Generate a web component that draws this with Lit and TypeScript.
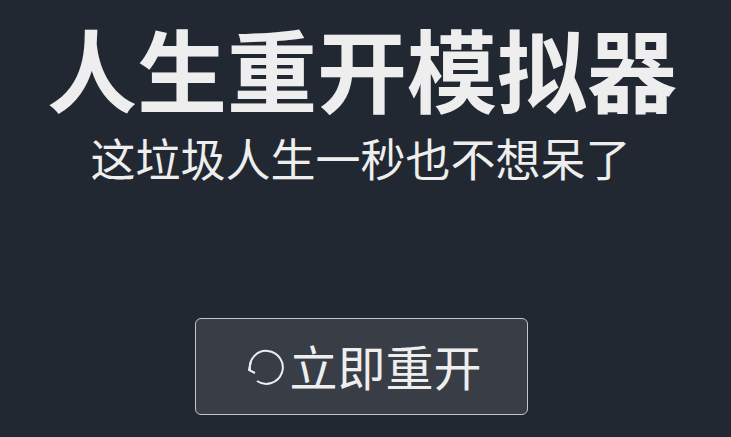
import { LitElement, html, css } from "lit";
import { customElement } from "lit/decorators.js";

@customElement("app-root")
export class AppRoot extends LitElement {
  static styles = css`
    :host {
      display: flex;
      flex-direction: column;
      align-items: center;
      width: 731px;
      height: 437px;
      box-sizing: border-box;
      padding-right: 9px;
      overflow: hidden;
      background: #222831;
      color: #eeeeee;
      font-family: "Microsoft YaHei", "Noto Sans CJK SC", sans-serif;
    }
    .title {
      margin: 12px 0 0 2px;
      font-size: 90px;
      line-height: 110px;
      font-weight: 700;
      white-space: nowrap;
    }
    .sub {
      margin: 8px 0 0 -1px;
      font-size: 45px;
      line-height: 56px;
      font-weight: 400;
      white-space: nowrap;
    }
    .btn {
      margin-top: 132px;
      width: 333px;
      height: 97px;
      box-sizing: border-box;
      display: flex;
      align-items: center;
      justify-content: center;
      background: #393e46;
      border: 1px solid #c4c5c8;
      border-radius: 6px;
      color: #eeeeee;
      font: inherit;
      font-size: 48px;
      padding: 0 0 4px 4px;
    }
    svg {
      width: 42px;
      height: 42px;
      flex: none;
      fill: none;
      stroke: #eeeeee;
      stroke-width: 2;
      margin: 4px 3px 0 0;
    }
  `;
  render() {
    return html`
      <h1 class="title">人生重开模拟器</h1>
      <h2 class="sub">这垃圾人生一秒也不想呆了</h2>
      <button class="btn">
        <svg viewBox="0 0 42 42">
          <path d="M6 24 A16.5 16.5 0 1 1 13 35" />
          <path d="M7 15.5 L5 24 L11 27" />
        </svg>立即重开
      </button>
    `;
  }
}
